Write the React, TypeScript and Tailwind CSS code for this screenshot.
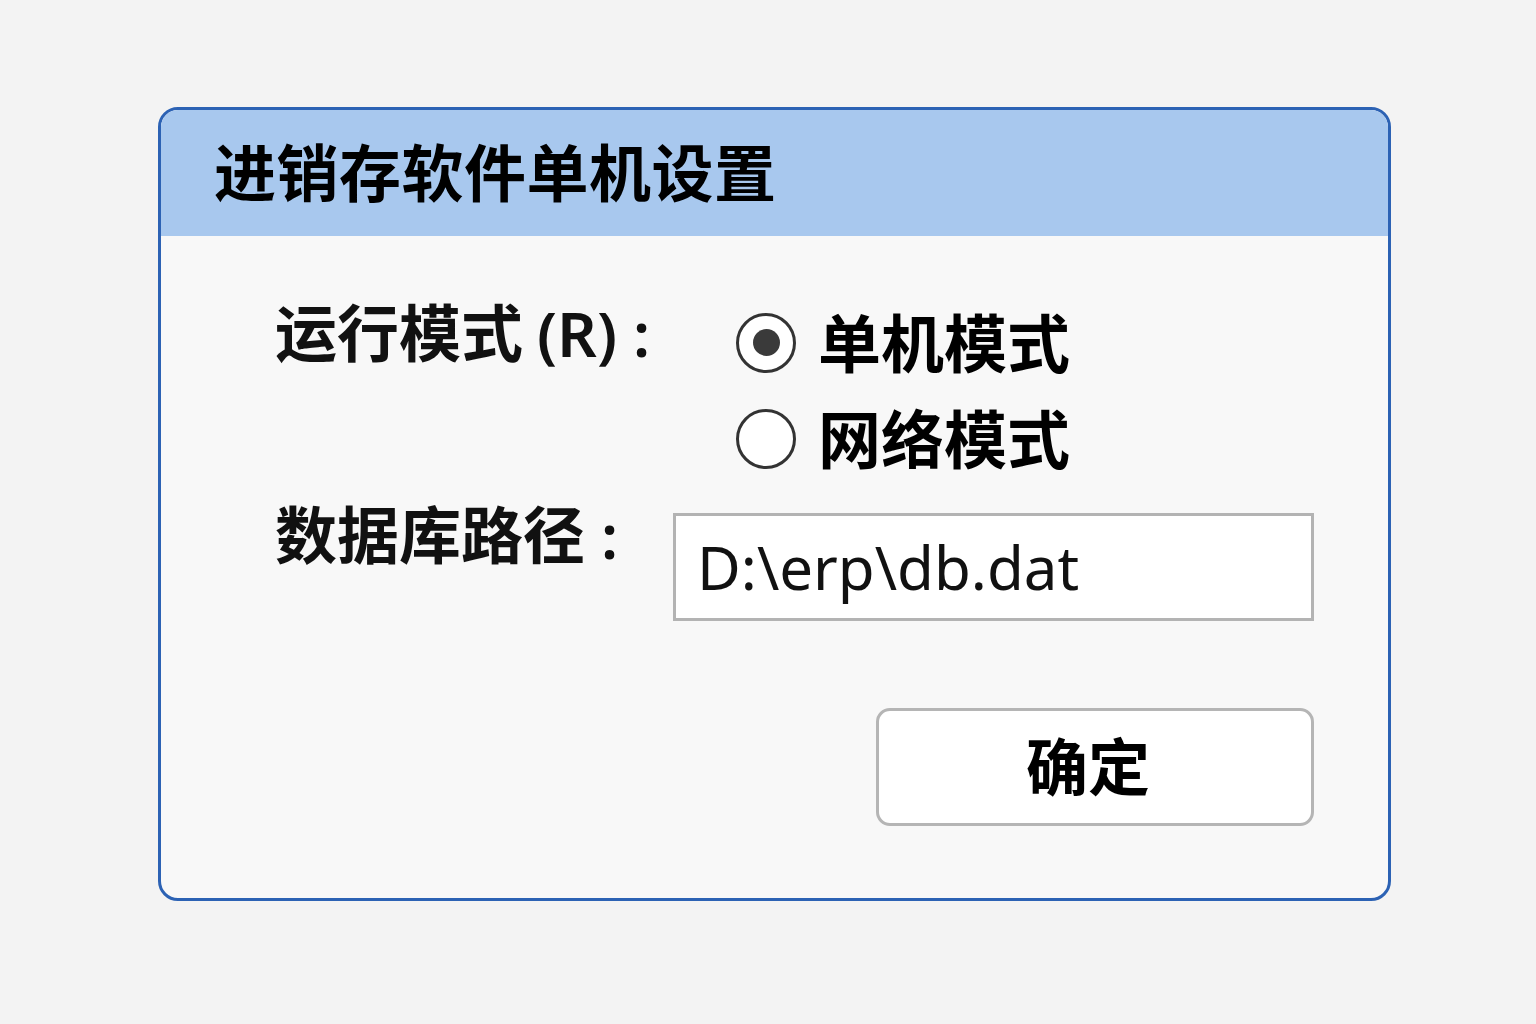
import React from 'react';

function Radio({ checked }: { checked: boolean }) {
  return (
    <span className="flex h-[60px] w-[60px] shrink-0 items-center justify-center rounded-full border-[3px] border-[#333] bg-white">
      {checked && <span className="h-[27px] w-[27px] rounded-full bg-[#3a3a3a]" />}
    </span>
  );
}

export default function App() {
  return (
    <div
      className="flex min-h-screen w-full items-start bg-[#f3f3f3] pl-[158px] pt-[107px]"
      style={{ fontFamily: '"Noto Sans", "Noto Sans CJK SC", sans-serif' }}
    >
      <div className="flex h-[794px] w-[1233px] flex-col overflow-hidden rounded-[20px] border-[3px] border-[#2c62b4] bg-[#f8f8f8]">
        {/* Title bar */}
        <div className="flex h-[126px] items-center bg-[#a8c8ee] pl-[53px]">
          <h1 className="text-[62px] font-bold leading-none tracking-[0.5px] text-black">
            进销存软件单机设置
          </h1>
        </div>

        <div className="flex flex-1 flex-col pl-[114px] pr-[74px] pt-[62px]">
          {/* Run mode */}
          <div className="flex">
            <div className="w-[463px] pt-[4px] text-[62px] font-semibold leading-none text-[#111]">
              运行模式<span className="ml-[14px]">(R)</span>
              <span className="ml-[16px]">:</span>
            </div>
            <div className="-ml-[2px] flex flex-col gap-[33px] pt-[13px]">
              <label className="flex items-center gap-[22px]">
                <Radio checked />
                <span className="text-[63px] font-bold leading-none text-black">单机模式</span>
              </label>
              <label className="flex items-center gap-[22px]">
                <Radio checked={false} />
                <span className="text-[63px] font-bold leading-none text-black">网络模式</span>
              </label>
            </div>
          </div>

          {/* DB path */}
          <div className="mt-[34px] flex items-start">
            <div className="w-[398px] text-[62px] font-semibold leading-none text-[#111]">
              数据库路径<span className="ml-[16px]">:</span>
            </div>
            <div className="mt-[9px] flex h-[108px] w-[641px] items-center border-[3px] border-[#b3b3b3] bg-white pl-[21px]">
              <span className="text-[60px] leading-none text-[#111]">D:\erp\db.dat</span>
            </div>
          </div>

          {/* OK button */}
          <div className="mt-[87px] flex justify-end">
            <button className="flex h-[118px] w-[438px] items-center justify-center rounded-[14px] border-[3px] border-[#b5b5b5] bg-white pr-[14px] text-[62px] font-bold text-black">
              确定
            </button>
          </div>
        </div>
      </div>
    </div>
  );
}
